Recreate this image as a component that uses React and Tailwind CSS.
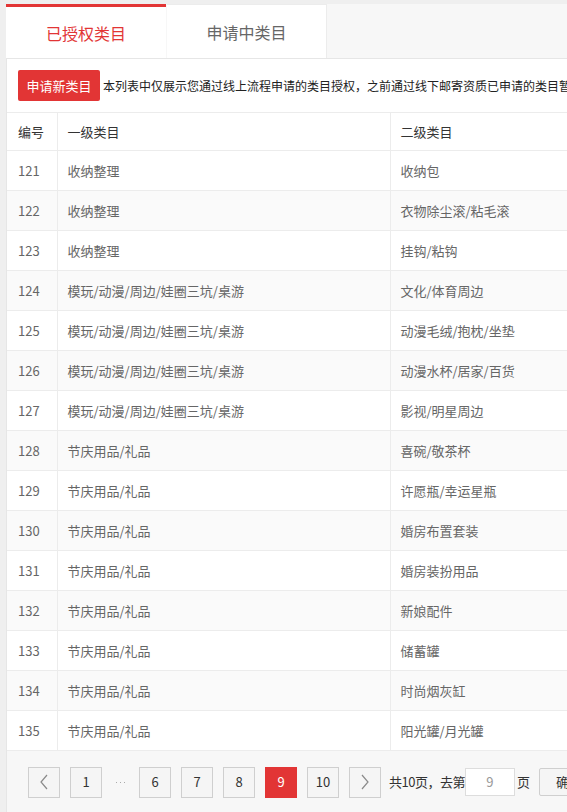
import React from 'react';

const rows = [
  ['121', '收纳整理', '收纳包'],
  ['122', '收纳整理', '衣物除尘滚/粘毛滚'],
  ['123', '收纳整理', '挂钩/粘钩'],
  ['124', '模玩/动漫/周边/娃圈三坑/桌游', '文化/体育周边'],
  ['125', '模玩/动漫/周边/娃圈三坑/桌游', '动漫毛绒/抱枕/坐垫'],
  ['126', '模玩/动漫/周边/娃圈三坑/桌游', '动漫水杯/居家/百货'],
  ['127', '模玩/动漫/周边/娃圈三坑/桌游', '影视/明星周边'],
  ['128', '节庆用品/礼品', '喜碗/敬茶杯'],
  ['129', '节庆用品/礼品', '许愿瓶/幸运星瓶'],
  ['130', '节庆用品/礼品', '婚房布置套装'],
  ['131', '节庆用品/礼品', '婚房装扮用品'],
  ['132', '节庆用品/礼品', '新娘配件'],
  ['133', '节庆用品/礼品', '储蓄罐'],
  ['134', '节庆用品/礼品', '时尚烟灰缸'],
  ['135', '节庆用品/礼品', '阳光罐/月光罐'],
];

const Chevron = ({ dir }) => (
  <svg width="10" height="16" viewBox="0 0 10 16" fill="none">
    <polyline
      points={dir === 'left' ? '8,1 2,8 8,15' : '2,1 8,8 2,15'}
      stroke="#8a8a8a"
      strokeWidth="1.2"
    />
  </svg>
);

function PageBtn({ children, active }) {
  return (
    <div
      className={`w-[32px] h-[31px] flex items-center justify-center text-[13px] shrink-0 ${
        active ? 'bg-[#e23535] text-white' : 'border border-[#cfcfcf] bg-[#f5f5f5] text-[#333]'
      }`}
    >
      {children}
    </div>
  );
}

export default function App() {
  return (
    <div
      className="w-[567px] h-[812px] overflow-hidden bg-[#efefef] pl-[6px] pt-[4px]"
      style={{ fontFamily: '"Noto Sans CJK SC", "Noto Sans", sans-serif' }}
    >
      <div className="w-[1000px]">
        {/* Tabs */}
        <div className="flex gap-px bg-[#f7f7f7] h-[54px]">
          <div className="w-[160px] bg-white border-t-[3px] border-[#e23535] flex items-center justify-center text-[16px] text-[#e23535]">
            已授权类目
          </div>
          <div className="w-[160px] bg-white border-t border-r border-[#ececec] flex items-center justify-center text-[16px] text-[#666]">
            申请中类目
          </div>
        </div>

        {/* Panel */}
        <div className="bg-white border-l border-t border-[#e6e6e6]">
          <div className="h-[53px] flex items-center pl-[11px] gap-[3px]">
            <button className="w-[82px] h-[31px] bg-[#e23535] text-white text-[13px] rounded-[2px] shrink-0">
              申请新类目
            </button>
            <span className="text-[12px] text-[#222] whitespace-nowrap">
              本列表中仅展示您通过线上流程申请的类目授权，之前通过线下邮寄资质已申请的类目暂不在此列表中展示
            </span>
          </div>

          <table className="w-full border-collapse text-[13px]">
            <thead>
              <tr className="h-[38px] border-t border-b border-[#ececec] text-[#333]">
                <th className="w-[50px] text-left font-normal pl-[11px]">编号</th>
                <th className="w-[333px] text-left font-normal pl-[10px] border-l border-[#ececec]">一级类目</th>
                <th className="text-left font-normal pl-[10px] border-l border-[#ececec]">二级类目</th>
              </tr>
            </thead>
            <tbody>
              {rows.map(([id, a, b], i) => (
                <tr key={id} className={`h-[40px] border-b border-[#ececec] text-[#666] ${i % 2 === 1 ? 'bg-[#fafafa]' : 'bg-white'}`}>
                  <td className="pl-[11px]">{id}</td>
                  <td className="pl-[10px] border-l border-[#ececec]">{a}</td>
                  <td className="pl-[10px] border-l border-[#ececec]">{b}</td>
                </tr>
              ))}
            </tbody>
          </table>

          {/* Pagination */}
          <div className="h-[62px] bg-[#f7f7f7] flex items-center pl-[21px] text-[12px] text-[#333]">
            <PageBtn><Chevron dir="left" /></PageBtn>
            <div className="w-[10px]" />
            <PageBtn>1</PageBtn>
            <div className="w-[37px] flex justify-center gap-[3px]">
              <span className="w-px h-px bg-[#aaa]" />
              <span className="w-px h-px bg-[#aaa]" />
              <span className="w-px h-px bg-[#aaa]" />
            </div>
            <div className="flex gap-[10px]">
              <PageBtn>6</PageBtn>
              <PageBtn>7</PageBtn>
              <PageBtn>8</PageBtn>
              <PageBtn active>9</PageBtn>
              <PageBtn>10</PageBtn>
              <PageBtn><Chevron dir="right" /></PageBtn>
            </div>
            <span className="ml-[8px] whitespace-nowrap text-[13px] tracking-[-0.5px]">共10页，去第</span>
            <div className="w-[50px] h-[28px] border border-[#ddd] bg-white flex items-center justify-center text-[13px] text-[#999] shrink-0">
              9
            </div>
            <span className="ml-[2px] text-[13px]">页</span>
            <button className="ml-[9px] w-[60px] h-[28px] border border-[#cfcfcf] bg-[#f5f5f5] rounded-[2px] text-[13px] text-[#333] shrink-0">
              确定
            </button>
          </div>
        </div>
      </div>
    </div>
  );
}
